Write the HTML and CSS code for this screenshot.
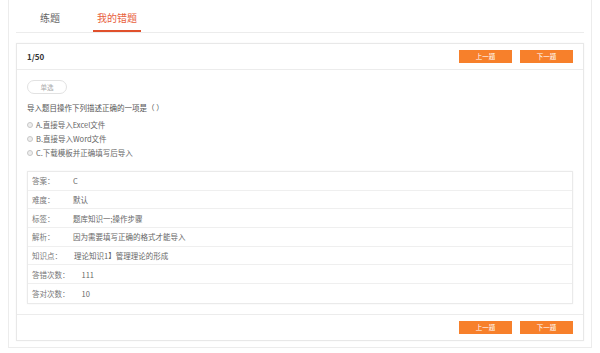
FILE: index.html
```html
<!DOCTYPE html>
<html lang="zh-CN">
<head>
    <meta charset="UTF-8">
    <meta name="viewport" content="width=device-width, initial-scale=1.0">
    <title>我的错题</title>
    <link rel="stylesheet" href="styles.css">
</head>
<body>
    <div class="page">
        <div class="tabs">
            <div class="tab">练题</div>
            <div class="tab active">我的错题</div>
        </div>

        <div class="panel">
            <div class="panel-head">
                <div class="count">1/50</div>
                <div class="btns">
                    <button class="btn">上一题</button>
                    <button class="btn">下一题</button>
                </div>
            </div>

            <div class="panel-body">
                <div class="tag">单选</div>
                <div class="question">导入题目操作下列描述正确的一项是（ ）</div>
                <div class="options">
                    <label class="option"><span class="radio"></span>A.直接导入Excel文件</label>
                    <label class="option"><span class="radio"></span>B.直接导入Word文件</label>
                    <label class="option"><span class="radio"></span>C.下载模板并正确填写后导入</label>
                </div>

                <div class="detail">
                    <div class="row"><span class="label">答案：</span><span>C</span></div>
                    <div class="row"><span class="label">难度：</span><span>默认</span></div>
                    <div class="row"><span class="label">标签：</span><span>题库知识一;操作步骤</span></div>
                    <div class="row"><span class="label">解析：</span><span>因为需要填写正确的格式才能导入</span></div>
                    <div class="row"><span class="label">知识点：</span><span>理论知识1】管理理论的形成</span></div>
                    <div class="row"><span class="label">答错次数：</span><span>111</span></div>
                    <div class="row"><span class="label">答对次数：</span><span>10</span></div>
                </div>
            </div>

            <div class="panel-foot">
                <div class="btns">
                    <button class="btn">上一题</button>
                    <button class="btn">下一题</button>
                </div>
            </div>
        </div>
    </div>
</body>
</html>
```

FILE: styles.css
```css
* {
    box-sizing: border-box;
}
body {
    margin: 0;
    background: #fff;
    font-family: "Noto Sans CJK SC", "Noto Sans", sans-serif;
    color: #555;
}
.page {
    margin: 0 8px;
    height: 348px;
    padding: 0 7px 8px;
    border: 1px solid #ececec;
    border-top: none;
}
.tabs {
    display: flex;
    padding-left: 20px;
    border-bottom: 1px solid #ececec;
}
.tab {
    padding: 6px 4px 0;
    line-height: 24px;
    font-size: 10px;
    color: #666;
    border-bottom: 2px solid transparent;
    margin-right: 29px;
}
.tab.active {
    color: #e8603c;
    border-bottom-color: #e0502c;
}
.panel {
    margin-top: 10px;
    border: 1px solid #e8e8e8;
    box-shadow: 0 0 2px rgba(0,0,0,0.04);
}
.panel-head,
.panel-foot {
    display: flex;
    align-items: center;
    height: 26px;
    padding: 0 10px;
}
.panel-head {
    justify-content: space-between;
    border-bottom: 1px solid #ececec;
}
.panel-foot {
    justify-content: flex-end;
    border-top: 1px solid #ececec;
}
.count {
    font-size: 8px;
    font-weight: bold;
    color: #333;
}
.btns {
    display: flex;
    gap: 8px;
}
.btn {
    width: 53px;
    height: 13px;
    padding: 0;
    border: none;
    background: #f7802b;
    color: #fff;
    font-family: inherit;
    font-size: 6.5px;
    line-height: 13px;
}
.panel-body {
    padding: 10px 10px;
}
.tag {
    width: 40px;
    height: 14px;
    line-height: 12px;
    border: 1px solid #e2e2e2;
    border-radius: 7px;
    text-align: center;
    font-size: 6.5px;
    color: #aaa;
}
.question {
    margin-top: 7px;
    line-height: 14px;
    font-size: 7.5px;
    color: #555;
}
.options {
    margin-top: 3px;
}
.option {
    display: flex;
    align-items: center;
    height: 14px;
    line-height: 14px;
    font-size: 7.5px;
    color: #666;
}
.radio {
    width: 6px;
    height: 6px;
    margin-right: 3px;
    border: 1px solid #c8c8c8;
    border-radius: 50%;
    background: #eee;
}
.detail {
    margin-top: 11px;
    border: 1px solid #eaeaea;
    box-shadow: 0 0 2px rgba(0,0,0,0.05);
}
.row {
    display: flex;
    align-items: center;
    height: 18.7px;
    padding-left: 4px;
    font-size: 7.5px;
    color: #666;
    border-bottom: 1px solid #efefef;
}
.row:last-child {
    border-bottom: none;
}
.label {
    min-width: 29px;
    margin-right: 12px;
    color: #777;
}
```
